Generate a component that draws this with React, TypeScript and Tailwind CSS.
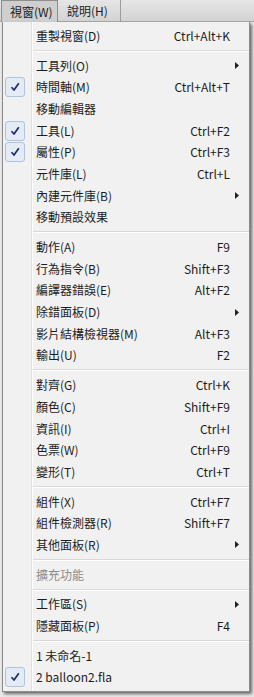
import React from "react";

type Item =
  | { type: "sep" }
  | { type: "item"; label: string; shortcut?: string; checked?: boolean; sub?: boolean; disabled?: boolean };

const items: Item[] = [
  { type: "item", label: "重製視窗(D)", shortcut: "Ctrl+Alt+K" },
  { type: "sep" },
  { type: "item", label: "工具列(O)", sub: true },
  { type: "item", label: "時間軸(M)", shortcut: "Ctrl+Alt+T", checked: true },
  { type: "item", label: "移動編輯器" },
  { type: "item", label: "工具(L)", shortcut: "Ctrl+F2", checked: true },
  { type: "item", label: "屬性(P)", shortcut: "Ctrl+F3", checked: true },
  { type: "item", label: "元件庫(L)", shortcut: "Ctrl+L" },
  { type: "item", label: "內建元件庫(B)", sub: true },
  { type: "item", label: "移動預設效果" },
  { type: "sep" },
  { type: "item", label: "動作(A)", shortcut: "F9" },
  { type: "item", label: "行為指令(B)", shortcut: "Shift+F3" },
  { type: "item", label: "編譯器錯誤(E)", shortcut: "Alt+F2" },
  { type: "item", label: "除錯面板(D)", sub: true },
  { type: "item", label: "影片結構檢視器(M)", shortcut: "Alt+F3" },
  { type: "item", label: "輸出(U)", shortcut: "F2" },
  { type: "sep" },
  { type: "item", label: "對齊(G)", shortcut: "Ctrl+K" },
  { type: "item", label: "顏色(C)", shortcut: "Shift+F9" },
  { type: "item", label: "資訊(I)", shortcut: "Ctrl+I" },
  { type: "item", label: "色票(W)", shortcut: "Ctrl+F9" },
  { type: "item", label: "變形(T)", shortcut: "Ctrl+T" },
  { type: "sep" },
  { type: "item", label: "組件(X)", shortcut: "Ctrl+F7" },
  { type: "item", label: "組件檢測器(R)", shortcut: "Shift+F7" },
  { type: "item", label: "其他面板(R)", sub: true },
  { type: "sep" },
  { type: "item", label: "擴充功能", disabled: true },
  { type: "sep" },
  { type: "item", label: "工作區(S)", sub: true },
  { type: "item", label: "隱藏面板(P)", shortcut: "F4" },
  { type: "sep" },
  { type: "item", label: "1 未命名-1" },
  { type: "item", label: "2 balloon2.fla", checked: true },
];

function Check() {
  return (
    <div className="w-[20px] h-[20px] rounded-[3px] border border-[#aec3dc] bg-[#e4ebf4] flex items-center justify-center">
      <svg width="10" height="10" viewBox="0 0 10 10">
        <path d="M1.5 5.2 L4 8 L8.8 1.2" fill="none" stroke="#1b2a6b" strokeWidth="1.7" strokeLinejoin="round" />
      </svg>
    </div>
  );
}

export default function App() {
  return (
    <div
      className="w-[254px] h-[697px] bg-[#e9e9e9] overflow-hidden text-[12px] text-[#1c1c1c]"
      style={{ fontFamily: '"Noto Sans CJK TC", "Noto Sans", sans-serif' }}
    >
      <div className="h-[22px] flex bg-gradient-to-b from-[#e6e6e6] to-[#d3d3d3] border-b border-[#a8a8a8]">
        <div className="ml-[1px] w-[57px] h-[22px] flex items-center pl-[8px] bg-[#cfcfcf] border border-b-0 border-[#8e8e8e]">
          視窗(W)
        </div>
        <div className="w-[63px] h-[22px] flex items-center pl-[9px] border-r border-[#9c9c9c]">說明(H)</div>
      </div>
      <div className="ml-[2px] w-[248px] h-[670px] bg-[#f1f1f1] border border-t-0 border-[#8a8a8a] shadow-[2px_2px_3px_rgba(0,0,0,0.55)] relative pt-[3px]">
        <div className="absolute left-[28px] top-0 bottom-0 w-[2px] border-l border-[#e0e0e0] border-r border-r-white" />
        {items.map((it, i) =>
          it.type === "sep" ? (
            <div key={i} className="h-[8px] flex items-center pl-[29px]">
              <div className="flex-1 h-[2px] border-t border-[#d8d8d8] border-b border-b-white" />
            </div>
          ) : (
            <div key={i} className="h-[21.7px] flex items-center relative">
              <div className="w-[30px] flex items-center pl-[2px]">{it.checked ? <Check /> : null}</div>
              <div className={"flex-1 pl-[3px] whitespace-nowrap " + (it.disabled ? "text-[#8c8c8c]" : "")}>{it.label}</div>
              <div className="whitespace-nowrap">{it.shortcut ?? ""}</div>
              <div className="w-[19px] flex items-center pl-[5px]">
                {it.sub ? (
                  <svg width="4" height="7" viewBox="0 0 4 7">
                    <path d="M0 0 L4 3.5 L0 7 Z" fill="#222" />
                  </svg>
                ) : null}
              </div>
            </div>
          )
        )}
      </div>
    </div>
  );
}
